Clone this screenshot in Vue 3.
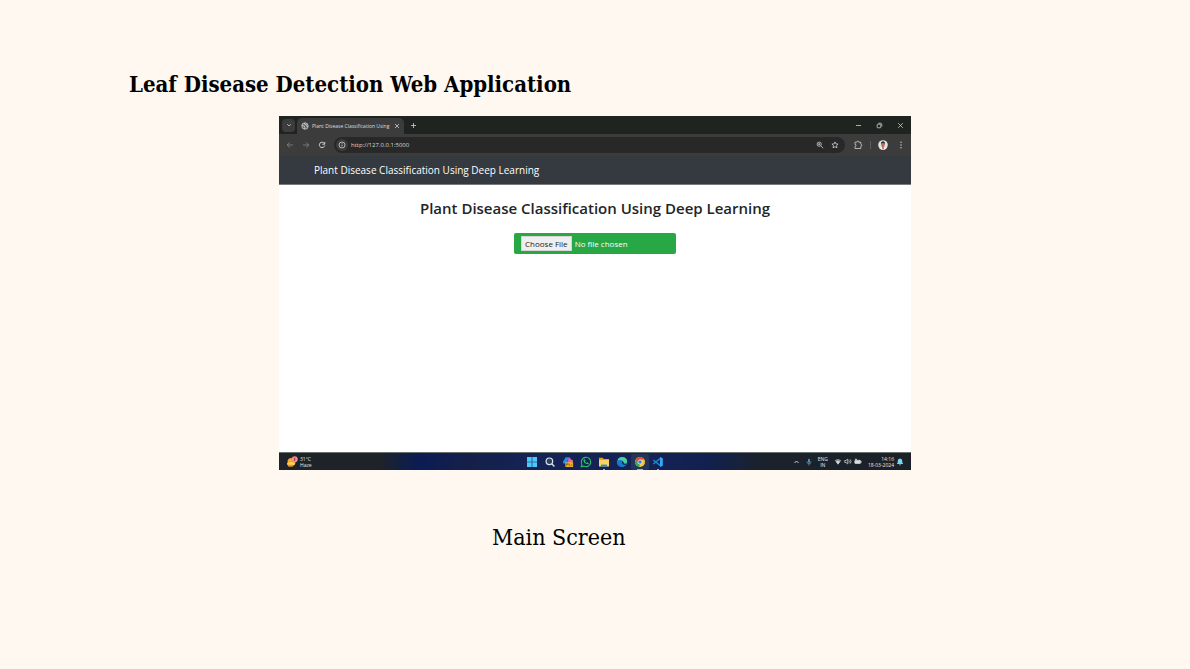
<script setup>
const title = 'Plant Disease Classification Using Deep Learning'
</script>

<template>
  <main class="slide">
    <h1 class="slide-title">Leaf Disease Detection Web Application</h1>

    <figure class="figure">
      <div class="window">
        <header class="tabs">
          <button class="tab-search" aria-label="Search tabs">
            <svg width="6" height="6" viewBox="0 0 6 6"><path d="M1.2 2.2 3 4l1.8-1.8" /></svg>
          </button>
          <div class="tab">
            <svg width="8" height="8" viewBox="0 0 8 8"><circle cx="4" cy="4" r="3.2" fill="#5d6265" /><path d="M1 3.4 3.2 4l.7 1.3-.6 1.7M3.4 1l.3 1.4 1.7.3.2 1.5 1.5.3" /></svg>
            <span class="tab-text">Plant Disease Classification Using</span>
            <button class="plain" aria-label="Close tab"><svg width="6" height="6" viewBox="0 0 6 6"><path d="m1 1 4 4M5 1 1 5" /></svg></button>
          </div>
          <button class="plain new-tab" aria-label="New tab"><svg width="7" height="7" viewBox="0 0 7 7"><path d="M3.5 1v5M1 3.5h5" /></svg></button>
          <div class="controls">
            <button class="plain" aria-label="Minimize"><svg width="7" height="7" viewBox="0 0 7 7"><path d="M1 3.5h5" /></svg></button>
            <button class="plain" aria-label="Restore"><svg width="7" height="7" viewBox="0 0 7 7"><rect x="1.2" y="2.2" width="3.6" height="3.6" rx=".7" /><path d="M2.5 1.2h2q1.3 0 1.3 1.3v2" /></svg></button>
            <button class="plain" aria-label="Close"><svg width="7" height="7" viewBox="0 0 7 7"><path d="m1.2 1.2 4.6 4.6M5.8 1.2 1.2 5.8" /></svg></button>
          </div>
        </header>

        <div class="toolbar">
          <button class="plain dim" aria-label="Back"><svg width="8" height="8" viewBox="0 0 8 8"><path d="M7 4H1.2M3.8 1.4 1.2 4l2.6 2.6" /></svg></button>
          <button class="plain dim" aria-label="Forward"><svg width="8" height="8" viewBox="0 0 8 8"><path d="M1 4h5.8M4.2 1.4 6.8 4 4.2 6.6" /></svg></button>
          <button class="plain" aria-label="Reload"><svg width="8" height="8" viewBox="0 0 8 8"><path stroke-width="1" d="M6.3 2.4A2.7 2.7 0 1 0 6.7 4.5M6.7 1v2.2H4.4" /></svg></button>
          <div class="address">
            <span class="info"><svg width="8" height="8" viewBox="0 0 8 8"><circle cx="4" cy="4" r="3" /><path d="M4 3.6v2M4 2.1v.8" /></svg></span>
            <input class="url" type="text" value="http://127.0.0.1:5000" aria-label="Address" />
            <button class="plain" aria-label="Zoom"><svg width="8" height="8" viewBox="0 0 8 8"><circle cx="3.2" cy="3.2" r="2.1" /><path d="m4.8 4.8 2.4 2.4M2.2 3.2h2M3.2 2.2v2" /></svg></button>
            <button class="plain" aria-label="Bookmark"><svg width="8" height="8" viewBox="0 0 8 8"><path d="m4 .9.9 2 2.2.2-1.6 1.5.5 2.2L4 5.7 2 6.8l.5-2.2L.9 3.1l2.2-.2z" /></svg></button>
          </div>
          <div class="actions">
            <button class="plain" aria-label="Extensions"><svg width="10" height="10" viewBox="0 0 10 10"><path d="M2 2.2h1.8q0-1.1 1-1.1t1 1.1h2v2.1q1 0 1 1t-1 1v2.2H2V6.4q1 0 1-1t-1-1z" /></svg></button>
            <span class="divider"></span>
            <button class="plain" aria-label="Profile"><svg width="10" height="10" viewBox="0 0 10 10"><circle class="fill" cx="5" cy="5" r="4.8" fill="#dfe5e3" /><path class="fill" fill="#f5f3ef" d="M1.6 8.3Q5 6 8.4 8.3 5 11.4 1.6 8.3" /><ellipse class="fill" cx="5" cy="4.4" rx="1.9" ry="2.6" fill="#b5735c" /><path class="fill" fill="#37262a" d="M3 3.9C2.7.5 7.3.5 7 3.9 6.2 2.8 4 2.8 3 3.9" /><path class="fill" fill="#a03c35" d="M4.4 6.4h1.2v2.8H4.4z" /></svg></button>
            <button class="plain menu" aria-label="Menu"><svg width="4" height="8" viewBox="0 0 4 8"><g class="fill" fill="#d5d5d5"><circle cx="2" cy="1.3" r=".7" /><circle cx="2" cy="4" r=".7" /><circle cx="2" cy="6.7" r=".7" /></g></svg></button>
          </div>
        </div>

        <nav class="navbar"><a class="brand" href="#">{{ title }}</a></nav>

        <section class="content">
          <h2 class="heading">{{ title }}</h2>
          <input class="file" type="file" aria-label="Leaf image" />
        </section>

        <footer class="taskbar">
          <div class="weather">
            <svg width="12" height="12" viewBox="0 0 12 12"><circle class="fill" cx="5.5" cy="6" r="4" fill="#f7a928" /><path class="fill" fill="#ffd35c" d="M1 7.3q4-2 8 0l-.6 1.5H1z" /><path class="fill" fill="#e99227" d="M1.5 9h6l-1 1.8h-4z" /><circle class="fill" cx="8.7" cy="3.3" r="3" fill="#f48c91" /><path d="M8.7 1.7v3.2" stroke="#6d252e" /></svg>
            <div class="small"><div>31°C</div><div>Haze</div></div>
          </div>

          <div class="apps">
            <button class="app" aria-label="Start"><svg width="12" height="12" viewBox="0 0 12 12"><g class="fill" fill="#4cc9f8"><path d="M1 1h4.7v4.7H1zM6.3 1H11v4.7H6.3zM1 6.3h4.7V11H1zM6.3 6.3H11V11H6.3z" /></g></svg></button>
            <button class="app" aria-label="Search"><svg width="12" height="12" viewBox="0 0 12 12"><circle cx="5.4" cy="5.3" r="3.3" fill="#34415d" stroke="#dce5ef" stroke-width="1.2" /><path d="m8 8 2.4 2.5" stroke="#dce5ef" stroke-width="1.3" /></svg></button>
            <button class="app" aria-label="Copilot"><svg width="12" height="12" viewBox="0 0 12 12"><path class="fill" fill="#238de8" d="M3.6 1.2h3L4.8 7.5H1.5Q.7 7 1.2 5.2z" /><path class="fill" fill="#b765dc" d="M6.5 1.2q2 0 2.3 2l1 .5q1.6.2 1.1 2.2L10 8H5z" /><path class="fill" fill="#f37263" d="M7.5 4h3.3L10 7H6.5z" /><path class="fill" fill="#ffbf28" d="M3.4 6.4h7.7v4.5H3.4z" /><path d="M4.4 9.8V7.6h1.4v1.1H4.4M7 9.9V7.5l1.5 2.4M9.8 7.4v2.5" stroke="#63431f" stroke-width=".6" /></svg></button>
            <button class="app" aria-label="WhatsApp"><svg width="12" height="12" viewBox="0 0 12 12"><path d="m1.2 10.8.7-2.5a4.7 4.7 0 1 1 1.8 1.8z" stroke="#25c863" stroke-width="1.1" /><path class="fill" fill="#25c863" d="m4 3.4.8-.1.7 1.5-.5.6q.6 1.1 1.6 1.5l.6-.7 1.5.7q0 1.4-1.5 1.4-3-.4-3.8-3.4 0-.9.6-1.5" /></svg></button>
            <button class="app running" aria-label="File Explorer"><svg width="12" height="12" viewBox="0 0 12 12"><path class="fill" fill="#e5a11c" d="M1 1.7h3.6l1.2 1.2H11v3H1z" /><path class="fill" fill="#ffd35a" d="M1 4h10v6.5H1z" /><path class="fill" fill="#278ad1" d="M3 8.6h6v1.9H3z" /></svg></button>
            <button class="app" aria-label="Edge"><svg width="12" height="12" viewBox="0 0 12 12"><circle class="fill" cx="6" cy="6" r="5.1" fill="#168bd2" /><path class="fill" fill="#4bcf9d" d="M2 3Q5-.2 8.7 1.6 12 3.5 11 6.5L9.3 8Q7.1 7.7 7.5 6 6.6 3.3 2 5z" /><path class="fill" fill="#1b78c8" d="M1 5.2Q4.2 3 6 5q-1.8 3.2 3.5 4.3Q6 12.3 2.7 9.8 1 8 1 5.2" /><path class="fill" fill="#142459" d="M6.1 4.9q1 0 1.3 1-.6 1.8 3.2 1.8L9.5 9Q5.2 8.8 6.1 4.9" /></svg></button>
            <button class="app active" aria-label="Chrome"><svg width="12" height="12" viewBox="0 0 12 12"><circle class="fill" cx="6" cy="6" r="5" fill="#f9c735" /><path class="fill" fill="#e74435" d="M1.7 3.5a5 5 0 0 1 8.6 0H6L3.8 7.2z" /><path class="fill" fill="#34a853" d="M1.7 3.5 3.9 7.2 6.1 8.5 5 10.9A5 5 0 0 1 1.7 3.5" /><circle cx="6" cy="6" r="2.1" fill="#3781e4" stroke="#fff" stroke-width=".6" /></svg></button>
            <button class="app running" aria-label="Visual Studio Code"><svg width="12" height="12" viewBox="0 0 12 12"><path d="m1.3 4 6.8 5.5M1.3 8l6.8-5.5" stroke="#168bd2" stroke-width="1.6" /><path class="fill" fill="#35aaf2" d="m8 1 2.8 1.2v7.6L8 11z" /></svg></button>
          </div>

          <div class="tray">
            <svg width="7" height="6" viewBox="0 0 7 6"><path stroke-width="1" d="m1.5 4 2-2 2 2" /></svg>
            <svg width="6" height="8" viewBox="0 0 6 8"><rect class="fill" x="2" y=".7" width="2" height="4" rx="1" fill="#4b98ad" /><path d="M1 3.5q0 2.3 2 2.3t2-2.3M3 5.8v1.7" stroke="#579bae" /></svg>
            <div class="small lang"><div>ENG</div><div>IN</div></div>
            <div class="status">
              <svg width="8" height="7" viewBox="0 0 8 7"><path class="fill" fill="#8b9297" d="M.7 2.5Q4-.5 7.3 2.5L4 6.4z" /><path class="fill" fill="#d7dce0" d="M2 3.8q2-1.5 4 0L4 6.4z" /></svg>
              <svg width="8" height="7" viewBox="0 0 8 7"><path d="M.8 2.5H2l1.8-1.4v4.8L2 4.5H.8zM5 2.4q.8 1 0 2.2M6.2 1.4q1.8 2 0 4.2" /></svg>
              <svg width="8" height="7" viewBox="0 0 8 7"><rect x=".8" y="2.3" width="5.7" height="3.2" rx=".6" fill="#d8dddf" /><path d="M7.3 3.2v1.4M2 .8v2M.9 1.3h2" /></svg>
            </div>
            <div class="notice">
              <div class="small clock"><div>14:16</div><div>18-03-2024</div></div>
              <svg width="8" height="8" viewBox="0 0 8 8"><path class="fill" fill="#76d6f1" d="M4 .5q2.3.1 2.3 2.5v1.5l.9 1.4H.8l.9-1.4V3Q1.7.6 4 .5M2.8 6.4h2.4Q4 8.2 2.8 6.4" /></svg>
            </div>
          </div>
        </footer>
      </div>
      <figcaption class="caption">Main Screen</figcaption>
    </figure>
  </main>
</template>

<style>
body { margin: 0; background: #fff8f0; }
</style>

<style scoped>
* { box-sizing: border-box; }
.slide { min-height: 100vh; padding-top: 68px; background: #fff8f0; color: #000; font-family: "DejaVu Serif Condensed", "DejaVu Serif", serif; }
.slide-title { margin: 0 0 16px 129px; font-size: 22px; line-height: 32px; font-weight: 700; white-space: nowrap; }
.figure { margin: 0 279px; }
.window { display: flex; flex-direction: column; aspect-ratio: 632 / 354; background: #fff; font-family: "Open Sans", "Noto Sans", sans-serif; overflow: hidden; }
svg { display: block; flex: none; fill: none; stroke: #ced0d1; stroke-width: .8; }
.fill { stroke: none; }
button { border: 0; padding: 0; }
.plain { display: flex; background: none; }
.tabs { display: flex; align-items: center; height: 18px; padding: 0 7px 0 3px; background: #202421; }
.tab-search { display: flex; align-items: center; justify-content: center; width: 13px; height: 13px; border-radius: 4px; background: #3b3c3b; }
.tab { display: flex; align-items: center; gap: 3px; width: 107px; height: 16px; margin: 2px 0 0 2px; padding: 0 4px; border-radius: 5px 5px 0 0; background: #3c3c3c; }
.tab-text { flex: 1; white-space: nowrap; font-size: 5px; line-height: 8px; color: #dededd; }
.new-tab { margin-left: 6px; }
.controls { display: flex; gap: 14px; margin-left: auto; }
.toolbar { display: flex; align-items: center; gap: 8px; height: 22px; padding: 0 8px 0 7px; background: #3c3c3c; }
.dim { opacity: .5; }
.address { display: flex; align-items: center; gap: 7px; flex: 1; height: 16px; padding: 0 6px 0 2px; border-radius: 8px; background: #282828; }
.info { display: flex; align-items: center; justify-content: center; width: 12px; height: 12px; border-radius: 6px; background: #3c3c3c; }
.url { flex: 1; min-width: 0; margin-left: -4px; padding: 0; border: 0; background: none; color: #d8d8d8; font: 6px/10px "Open Sans", "Noto Sans", sans-serif; }
.actions { display: flex; align-items: center; gap: 7px; }
.divider { width: 1px; height: 8px; background: #5c5e5f; }
.menu { margin-left: 4px; }
.navbar { display: flex; align-items: center; height: 29px; padding: 0 35px; background: #343a40; border-bottom: 1px solid #777b7e; }
.brand { color: #fff; font-size: 10px; line-height: 16px; text-decoration: none; white-space: nowrap; }
.content { display: flex; flex: 1; flex-direction: column; align-items: center; padding-top: 11px; }
.heading { margin: 0 0 13px; color: #212529; font-size: 15px; line-height: 24px; font-weight: 600; white-space: nowrap; }
.file { width: 162px; height: 21px; padding: 3px 7px; border-radius: 2px; background: #28a745; color: #fff; font: 8px/15px "Open Sans", "Noto Sans", sans-serif; }
.file::file-selector-button { height: 15px; margin: 0 3px 0 0; padding: 0 3px; border: 1px solid #d5d5d5; border-radius: 0; background: #efefef; color: #222; font: inherit; line-height: 13px; }
.taskbar { display: grid; grid-template-columns: 1fr auto 1fr; align-items: center; height: 18px; padding: 0 7px; border-top: 1px solid #69736e; background: linear-gradient(90deg, #1d2329 0 16%, #0b1c54 22%, #151f49 30%, #142457 40%, #142154 62%, #10204f 68%, #1b222d 76%, #1b2127); }
.weather, .tray, .status, .notice { display: flex; align-items: center; }
.weather { gap: 2px; }
.small { color: #e3e6e9; font-size: 5px; line-height: 6px; white-space: nowrap; }
.apps { display: flex; }
.app { position: relative; display: flex; align-items: center; justify-content: center; width: 18px; height: 16px; background: none; }
.active { border-radius: 2px; background: #26345c; }
.running::after, .active::after { position: absolute; bottom: 0; width: 2px; height: 1px; background: #aab0bf; content: ""; }
.active::after { width: 6px; background: #5ec6e9; }
.tray { justify-content: flex-end; gap: 6px; }
.lang { text-align: center; }
.status, .notice { gap: 2px; }
.clock { text-align: right; }
.caption { margin: 51px 0 0 213px; font-size: 23px; line-height: 32px; white-space: nowrap; }
</style>
